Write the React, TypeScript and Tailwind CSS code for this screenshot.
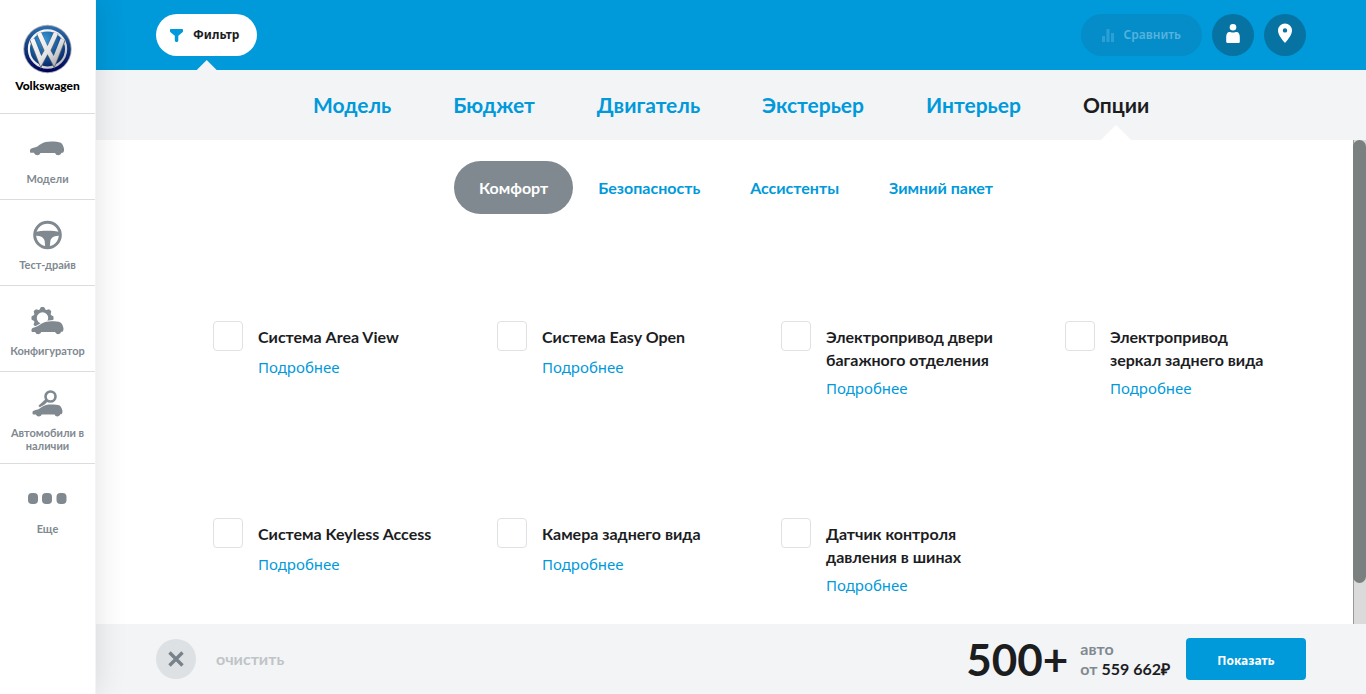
import React, { useState } from "react";

const CAR =
  "M0 9.500C0 7.800 2 7.200 4.500 6.600 7 6 8.500 4.500 11 3 14 1.200 17 .5 21 .5c4 0 8 .3 9.800 1.200 1.700 1 2.700 3.500 3.200 6 .3 2-.3 3.400-1.200 4H31.600a3.500 3.500 0 0 1-6.600.3H10.500a3.500 3.500 0 0 1-6.600-.2L.5 11.800C0 11.500 0 10.500 0 9.500Z";

const GEAR_ANGLES = [0, 45, 90, 135, 180, 225, 270, 315];

function Logo() {
  return (
    <svg width="50" height="50" viewBox="0 0 50 50" aria-hidden="true">
      <defs>
        <linearGradient id="ring" x1="0" y1="0" x2="0" y2="1">
          <stop offset="0" stopColor="#2f6fae" />
          <stop offset="0.5" stopColor="#10377c" />
          <stop offset="1" stopColor="#00005a" />
        </linearGradient>
        <radialGradient id="disc" cx="0.4" cy="0.25" r="0.8">
          <stop offset="0" stopColor="#3b9ad6" />
          <stop offset="0.5" stopColor="#155a9f" />
          <stop offset="1" stopColor="#071d5c" />
        </radialGradient>
        <linearGradient id="chrome" x1="0" y1="0" x2="1" y2="1">
          <stop offset="0" stopColor="#ffffff" />
          <stop offset="0.6" stopColor="#e3e3e5" />
          <stop offset="1" stopColor="#a9a9ad" />
        </linearGradient>
      </defs>
      <circle cx="24.500" cy="25" r="24.200" fill="#a8adb3" />
      <circle cx="24.500" cy="25" r="23.300" fill="url(#ring)" />
      <g transform="translate(-.5 0)">
        <circle cx="25" cy="25" r="18.600" fill="url(#disc)" stroke="url(#chrome)" strokeWidth="2.200" />
        <path
          d="M16.500 9 24 26.500h2L33.500 9M9.500 15.500l9 22.500L24.300 26h1.400L31.500 38l9-22.500"
          fill="none"
          stroke="#5d6570"
          strokeWidth="5.400"
        />
        <path
          d="M16.500 8.800 23.800 25h2.400L33.500 8.800M9.800 15.300l8.700 22L24 27.500h2l5.500 9.800 8.700-22"
          fill="none"
          stroke="url(#chrome)"
          strokeWidth="4.400"
        />
      </g>
    </svg>
  );
}

function CarIcon() {
  return (
    <svg width="35" height="16" viewBox="0 0 35 16" fill="currentColor" aria-hidden="true">
      <path d={CAR} />
    </svg>
  );
}

function WheelIcon() {
  return (
    <svg width="30" height="30" viewBox="0 0 30 30" aria-hidden="true">
      <circle cx="14.500" cy="15" r="12.800" fill="none" stroke="currentColor" strokeWidth="3" />
      <path
        fill="currentColor"
        d="M2 12.200C5.500 11.200 9.500 10.800 14.500 10.800s9 .4 12.500 1.400v3.400c-5 .2-8.800 1.700-9.600 5.200l-.7 6.500h-4.400l-.7-6.500c-.8-3.500-4.600-5-9.600-5.200Z"
      />
    </svg>
  );
}

function ConfigIcon() {
  return (
    <svg width="34" height="28" viewBox="0 0 34 28" aria-hidden="true">
      <circle cx="11.500" cy="11" r="7.200" fill="none" stroke="currentColor" strokeWidth="3" />
      {GEAR_ANGLES.map((angle) => (
        <path key={angle} d="M8 3.500 9.800.2Q11.500-.4 13.200.2L15 3.500Z" fill="currentColor" transform={`rotate(${angle} 11.500 11)`} />
      ))}
      <g transform="translate(.5 13.800) scale(.94)" fill="currentColor" stroke="#fff" strokeWidth="2" paintOrder="stroke">
        <path d={CAR} />
      </g>
    </svg>
  );
}

function StockIcon() {
  return (
    <svg width="32" height="27" viewBox="0 0 32 27" aria-hidden="true">
      <circle cx="18.500" cy="6.500" r="5" fill="none" stroke="currentColor" strokeWidth="2.600" />
      <path d="m15 10-7.500 7" stroke="currentColor" strokeWidth="3.200" />
      <g transform="translate(.5 14) scale(.88)" fill="currentColor" stroke="#fff" strokeWidth="1.500" paintOrder="stroke">
        <path d={CAR} />
      </g>
    </svg>
  );
}

function DotsIcon() {
  return (
    <svg width="40" height="12" viewBox="0 0 40 12" fill="currentColor" aria-hidden="true">
      <rect x="0" y="0" width="10" height="11" rx="4" />
      <rect x="14" y="0" width="10" height="11" rx="4" />
      <rect x="28.500" y="0" width="10" height="11" rx="4" />
    </svg>
  );
}

const NAV = [
  { lines: ["Модели"], icon: <CarIcon />, box: "h-[86px] border-b", iconBox: "h-[58px] pt-3" },
  { lines: ["Тест-драйв"], icon: <WheelIcon />, box: "h-[86px] border-b", iconBox: "h-[58px] pt-3" },
  { lines: ["Конфигуратор"], icon: <ConfigIcon />, box: "h-[86px] border-b", iconBox: "h-[58px] pt-3" },
  { lines: ["Автомобили в", "наличии"], icon: <StockIcon />, box: "h-[92px] border-b", iconBox: "h-[54px] pt-2" },
  { lines: ["Еще"], icon: <DotsIcon />, box: "h-[86px]", iconBox: "h-[58px] pt-3" },
];

const TABS = ["Модель", "Бюджет", "Двигатель", "Экстерьер", "Интерьер", "Опции"];
const GROUPS = ["Комфорт", "Безопасность", "Ассистенты", "Зимний пакет"];
const OPTIONS = [
  ["Система Area View"],
  ["Система Easy Open"],
  ["Электропривод двери", "багажного отделения"],
  ["Электропривод", "зеркал заднего вида"],
  ["Система Keyless Access"],
  ["Камера заднего вида"],
  ["Датчик контроля", "давления в шинах"],
];

function Sidebar() {
  return (
    <aside className="relative z-10 flex w-24 shrink-0 flex-col border-r border-[#f3f4f6] bg-white shadow-[0_0_30px_rgba(0,0,0,0.12)]">
      <a href="#home" className="flex h-[114px] flex-col items-center border-b border-[#dadcde] pt-6 text-black">
        <Logo />
        <span className="mt-1 text-[12px] leading-4 font-black">Volkswagen</span>
      </a>
      <nav>
        {NAV.map((item) => (
          <a
            key={item.lines[0]}
            href="#nav"
            className={`flex flex-col items-center border-[#dadcde] text-center text-[#808990] ${item.box}`}
          >
            <span className={`flex shrink-0 items-center justify-center ${item.iconBox}`}>{item.icon}</span>
            <span className="text-[11px] leading-[13px] font-bold">
              {item.lines.map((line) => (
                <span key={line} className="block">
                  {line}
                </span>
              ))}
            </span>
          </a>
        ))}
      </nav>
    </aside>
  );
}

function TopBar() {
  return (
    <header className="flex h-[70px] shrink-0 items-center justify-between bg-[#0099da] px-[60px] font-['Noto_Sans',sans-serif]">
      <button className="relative flex h-[42px] items-center gap-2.5 rounded-full bg-white pr-[18px] pl-3.5 text-[12px] font-bold text-[#1c1d1f]">
        <svg width="13" height="13" viewBox="0 0 13 13" fill="#0099da" aria-hidden="true">
          <path d="M.8 0h11.400c.5 0 .8.300.8.800v1.500c0 .4-.2.700-.5 1L8.300 6.700v4.500c0 1-.6 1.800-1.700 1.800s-1.800-.8-1.800-1.800V6.700L.5 3.300C.2 3 0 2.700 0 2.300V.8C0 .3.300 0 .8 0Z" />
        </svg>
        Фильтр
        <span className="absolute top-full left-1/2 mt-1 h-2.5 w-5 -translate-x-1/2 bg-[#f3f4f6] [clip-path:polygon(50%_0,100%_100%,0_100%)]" />
      </button>
      <div className="flex items-center gap-2.5">
        <button className="flex h-[42px] items-center gap-2.5 rounded-full bg-[#058dc9] px-[21px] text-[12px] font-semibold text-[#55b3dd]">
          <svg width="12" height="13" viewBox="0 0 12 13" fill="#2ba0d6" aria-hidden="true">
            <path d="M0 7h3v6H0zM4.500 0h3v13h-3zM9 4h3v9H9z" />
          </svg>
          Сравнить
        </button>
        <button aria-label="Профиль" className="flex size-[42px] items-center justify-center rounded-full bg-[#0773a3] text-white">
          <svg width="14" height="22" viewBox="0 0 14 22" fill="currentColor" aria-hidden="true">
            <circle cx="7" cy="3.300" r="3.300" />
            <path d="M3.500 8c1 0 1.500.6 3.500.6s2.500-.6 3.500-.6c2.200 0 3.300 2 3.300 5v4.700c0 .8-.5 1.200-1.200 1.200H1.400c-.7 0-1.200-.4-1.200-1.200V13c0-3 1.100-5 3.300-5Z" />
          </svg>
        </button>
        <button aria-label="Дилер" className="flex size-[42px] items-center justify-center rounded-full bg-[#0773a3] text-white">
          <svg width="14" height="24" viewBox="0 0 14 24" fill="currentColor" aria-hidden="true">
            <path fillRule="evenodd" d="M7 .5a7 7 0 0 1 7 7c0 4-3.500 8.500-7 12.500C3.500 16 0 11.500 0 7.500a7 7 0 0 1 7-7Zm0 4.700a2.200 2.200 0 1 0 0 4.400 2.200 2.200 0 0 0 0-4.400Z" />
          </svg>
        </button>
      </div>
    </header>
  );
}

function OptionItem({ lines, index }: { lines: string[]; index: number }) {
  const id = `option-${index}`;
  return (
    <div className="flex h-[197px] items-start gap-[15px] pl-[57px]">
      <input
        id={id}
        type="checkbox"
        className="size-[30px] shrink-0 appearance-none rounded border border-[#dfe1e3] bg-white checked:bg-[#0099da]"
      />
      <div className="pt-1">
        <label htmlFor={id} className="block min-h-[25px] text-[16px] leading-[23px] font-bold whitespace-nowrap text-[#1c1d1f]">
          {lines.map((line) => (
            <span key={line} className="block">
              {line}
            </span>
          ))}
        </label>
        <a href="#details" className="mt-1.5 block font-['Noto_Sans',sans-serif] text-[15px] leading-[22px] text-[#0099da]">
          Подробнее
        </a>
      </div>
    </div>
  );
}

export default function App() {
  const [tab, setTab] = useState("Опции");
  const [group, setGroup] = useState("Комфорт");
  return (
    <div className="flex h-screen overflow-hidden bg-white font-[Lato,sans-serif]">
      <Sidebar />
      <div className="flex min-w-0 flex-1 flex-col">
        <TopBar />
        <nav className="flex h-[70px] shrink-0 justify-center gap-[62px] bg-[#f3f4f6]">
          {TABS.map((t) => (
            <button
              key={t}
              onClick={() => setTab(t)}
              className={`relative text-[21px] font-bold ${t === tab ? "text-[#1c1d1f]" : "text-[#0099da]"}`}
            >
              {t}
              {t === tab && (
                <span className="absolute bottom-0 left-1/2 h-[15px] w-[30px] -translate-x-1/2 bg-white [clip-path:polygon(50%_0,100%_100%,0_100%)]" />
              )}
            </button>
          ))}
        </nav>
        <div className="flex min-h-0 flex-1">
          <main className="min-w-0 flex-1 overflow-hidden pr-[61px] pl-[60px]">
            <div className="flex justify-center pt-[21px] pl-6">
              {GROUPS.map((g) => (
                <button
                  key={g}
                  onClick={() => setGroup(g)}
                  className={`h-[53px] rounded-full px-[25px] text-[16px] font-bold ${
                    g === group ? "bg-[#808990] text-white" : "text-[#0099da]"
                  }`}
                >
                  {g}
                </button>
              ))}
            </div>
            <div className="grid grid-cols-4 pt-[107px]">
              {OPTIONS.map((lines, i) => (
                <OptionItem key={lines[0]} lines={lines} index={i} />
              ))}
            </div>
          </main>
          <div className="w-[13px] shrink-0 border-l border-[#999] bg-[#dadada]">
            <div className="-ml-px h-[91.5%] rounded-full bg-[#7a7f80]" />
          </div>
        </div>
        <footer className="flex h-[70px] shrink-0 items-center justify-between bg-[#f3f4f6] px-[60px]">
          <button className="flex items-center gap-5 text-[16px] font-bold text-[#bfc4c7]">
            <span className="flex size-10 items-center justify-center rounded-full bg-[#dde1e3]">
              <svg width="16" height="16" viewBox="0 0 16 16" stroke="#78828a" strokeWidth="3.400" aria-hidden="true">
                <path d="m1.500 1.500 13 13M14.500 1.500l-13 13" />
              </svg>
            </span>
            очистить
          </button>
          <div className="flex items-center text-[#1c1d1f]">
            <span className="text-[44px] leading-none font-bold">500+</span>
            <p className="ml-3 text-[16px] leading-5 font-bold">
              <span className="block text-[#808990]">авто</span>
              <span className="text-[#808990]">от</span> 559 662₽
            </p>
            <button className="ml-4 h-[42px] w-[120px] rounded bg-[#0099da] pt-1 font-['Noto_Sans',sans-serif] text-[12px] font-bold text-white">
              Показать
            </button>
          </div>
        </footer>
      </div>
    </div>
  );
}
